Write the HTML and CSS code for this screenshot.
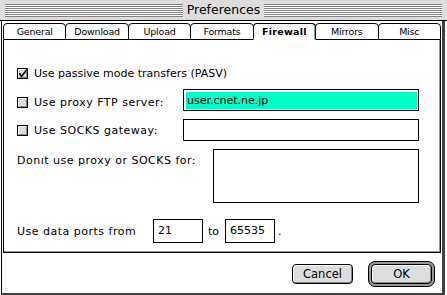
FILE: index.html
```html
<!DOCTYPE html>
<html>
<head>
<meta charset="utf-8">
<link rel="stylesheet" href="styles.css">
</head>
<body>
<div class="window">
  <div class="titlebar">
    <div class="stripes"></div>
    <div class="title">Preferences</div>
    <div class="stripes"></div>
  </div>
  <div class="frame">
    <div class="tabs">
      <div class="tab">General</div>
      <div class="tab">Download</div>
      <div class="tab">Upload</div>
      <div class="tab">Formats</div>
      <div class="tab active">Firewall</div>
      <div class="tab">Mirrors</div>
      <div class="tab">Misc</div>
    </div>
    <div class="panel">
      <div class="row r1">
        <svg class="cb" width="11" height="11" viewBox="0 0 11 11">
          <rect x="0.5" y="0.5" width="10" height="10" fill="#dddddd" stroke="#000"/>
          <path d="M1.5 9V1.5H9" stroke="#fff" fill="none"/>
          <path d="M2 9.5H9.5V2" stroke="#888" fill="none"/>
          <path d="M2.3 5.2L4.6 8.4L10.6 0.6" stroke="#000" stroke-width="1.7" fill="none"/>
        </svg>
        <span class="label">Use passive mode transfers (PASV)</span>
      </div>
      <div class="row r2">
        <svg class="cb low" width="11" height="11" viewBox="0 0 11 11">
          <rect x="0.5" y="0.5" width="10" height="10" fill="#dddddd" stroke="#000"/>
          <path d="M1.5 9V1.5H9" stroke="#fff" fill="none"/>
          <path d="M2 9.5H9.5V2" stroke="#888" fill="none"/>
        </svg>
        <span class="label low">Use proxy FTP server:</span>
        <div class="field wide"><span class="sel">user.cnet.ne.jp</span></div>
      </div>
      <div class="row r3">
        <svg class="cb" width="11" height="11" viewBox="0 0 11 11">
          <rect x="0.5" y="0.5" width="10" height="10" fill="#dddddd" stroke="#000"/>
          <path d="M1.5 9V1.5H9" stroke="#fff" fill="none"/>
          <path d="M2 9.5H9.5V2" stroke="#888" fill="none"/>
        </svg>
        <span class="label">Use SOCKS gateway:</span>
        <div class="field wide"></div>
      </div>
      <div class="row r4">
        <span class="label top">Donıt use proxy or SOCKS for:</span>
        <div class="field area"></div>
      </div>
      <div class="row r5">
        <span class="label ports">Use data ports from</span>
        <div class="field port">21</div>
        <span class="to">to</span>
        <div class="field port">65535</div>
        <span class="dot">.</span>
      </div>
    </div>
    <div class="buttons">
      <div class="btn">Cancel</div>
      <div class="ring"><div class="btn">OK</div></div>
    </div>
  </div>
</div>
</body>
</html>
```
FILE: styles.css
```css
* { box-sizing: border-box; }
html, body { margin: 0; padding: 0; background: #fff; }
body {
  width: 447px;
  height: 295px;
  overflow: hidden;
  font-family: "DejaVu Sans", sans-serif;
  font-size: 11px;
  color: #000;
}
.window {
  width: 447px;
  height: 295px;
  display: flex;
  flex-direction: column;
}
.titlebar {
  height: 21px;
  flex: none;
  background: #dddddd;
  border-bottom: 1px solid #000;
  display: flex;
  align-items: center;
  padding: 0 5px;
  gap: 4px;
}
.stripes {
  flex: 1;
  height: 13px;
  background: repeating-linear-gradient(to bottom, #808080 0 1px, #ffffff 1px 2px);
}
.title {
  font-size: 12.5px;
  line-height: 14px;
}
.frame {
  flex: 1;
  margin-left: 1px;
  margin-right: 2px;
  border-left: 1px solid #000;
  border-right: 3px solid #404040;
  border-bottom: 2px solid #404040;
  padding: 2px 1px 0 1px;
  display: flex;
  flex-direction: column;
}
.tabs {
  display: flex;
  height: 17px;
  flex: none;
}
.tab {
  flex: 1;
  border: 1px solid #000;
  border-radius: 4px 4px 0 0;
  margin-left: -1px;
  text-align: center;
  font-size: 9.5px;
  line-height: 15px;
  letter-spacing: -0.2px;
  background: #fff;
  white-space: nowrap;
}
.tab:first-child { margin-left: 0; }
.tab.active {
  border-bottom-color: #fff;
  font-weight: bold;
  letter-spacing: 0.3px;
  box-shadow: inset -1px 0 0 #999;
  position: relative;
}
.panel {
  flex: none;
  height: 213px;
  border: 1px solid #000;
  border-top: none;
  box-shadow: inset -1px -1px 0 #999;
  padding: 24px 21px 0 13px;
}
.row {
  display: flex;
  align-items: center;
}
.r1 { height: 18px; }
.r2 { margin-top: 7px; }
.r3 { margin-top: 8px; }
.r4 { margin-top: 8px; align-items: flex-start; }
.r5 { margin-top: 16px; }
.cb {
  flex: none;
  margin-right: 6px;
  overflow: visible;
}
.low { position: relative; top: 2px; }
.label { white-space: nowrap; letter-spacing: 0.5px; }
.r1 .label { letter-spacing: 0; }
.label.top { margin-top: 5px; }
.label.ports { width: 136px; }
.field {
  border: 1px solid #000;
  background: #fff;
}
.wide {
  width: 236px;
  height: 22px;
  margin-left: auto;
  padding: 2px 1px 1px 2px;
}
.sel {
  display: block;
  height: 100%;
  background: #00ffc6;
  padding-left: 1px;
  line-height: 17px;
}
.area {
  width: 206px;
  height: 54px;
  margin-left: auto;
}
.port {
  width: 50px;
  height: 24px;
  padding-left: 4px;
  line-height: 22px;
}
.to { margin: 0 6px 0 5px; }
.dot { margin-left: 3px; }
.buttons {
  flex: 1;
  display: flex;
  justify-content: flex-end;
  align-items: center;
  gap: 15px;
  padding: 2px 6px 0 0;
}
.btn {
  width: 61px;
  height: 20px;
  border: 1px solid #000;
  border-radius: 4px;
  background: #dddddd;
  box-shadow: inset 1px 1px 0 #fff, inset -1px -1px 0 #888;
  display: flex;
  align-items: center;
  justify-content: center;
  font-size: 11.5px;
}
.ring {
  border: 1px solid #000;
  border-radius: 7px;
  padding: 2px;
  background: #999;
}
```
